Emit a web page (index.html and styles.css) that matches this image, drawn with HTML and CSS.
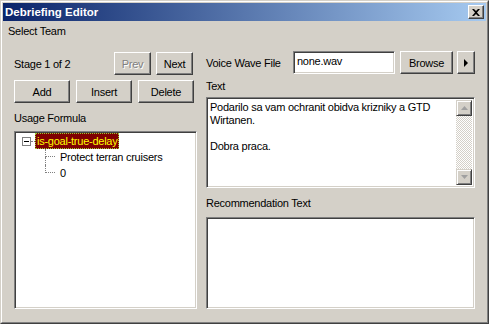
FILE: index.html
```html
<!DOCTYPE html>
<html lang="en">
<head>
    <meta charset="UTF-8">
    <title>Debriefing Editor</title>
    <link rel="stylesheet" href="styles.css">
</head>
<body>
    <div class="window">
        <div class="frame">
            <div class="titlebar">
                <span class="title">Debriefing Editor</span>
                <button class="close-btn" title="Close">
                    <svg width="8" height="7" viewBox="0 0 8 7"><path d="M0 0h2l2 2 2-2h2L5 3.5 8 7H6L4 5 2 7H0l3-3.5z" fill="#000"/></svg>
                </button>
            </div>
            <div class="menubar"><span class="menu-item">Select Team</span></div>

            <div class="content">
                <div class="left">
                    <div class="stage-row">
                        <span class="stage-label">Stage 1 of 2</span>
                        <button class="btn btn-small" disabled>Prev</button>
                        <button class="btn btn-small">Next</button>
                    </div>
                    <div class="edit-row">
                        <button class="btn btn-wide">Add</button>
                        <button class="btn btn-wide">Insert</button>
                        <button class="btn btn-wide">Delete</button>
                    </div>
                    <div class="label label-formula">Usage Formula</div>
                    <div class="sunken tree">
                        <div class="tree-row">
                            <span class="expander"><span class="minus"></span></span>
                            <span class="stub"></span>
                            <span class="node selected">is-goal-true-delay</span>
                        </div>
                        <div class="tree-row">
                            <span class="indent"></span>
                            <span class="elbow"><span class="elbow-top"></span><span class="elbow-bottom"></span></span>
                            <span class="node">Protect terran cruisers</span>
                        </div>
                        <div class="tree-row">
                            <span class="indent"></span>
                            <span class="elbow"><span class="elbow-top"></span></span>
                            <span class="node">0</span>
                        </div>
                    </div>
                </div>

                <div class="right">
                    <div class="voice-row">
                        <span class="voice-label">Voice Wave File</span>
                        <div class="sunken field">none.wav</div>
                        <button class="btn btn-browse">Browse</button>
                        <button class="btn btn-play">
                            <svg width="4" height="8" viewBox="0 0 4 8"><path d="M0 0l4 4-4 4z" fill="#000"/></svg>
                        </button>
                    </div>
                    <div class="label label-text">Text</div>
                    <div class="sunken memo">
                        <div class="memo-text">Podarilo sa vam ochranit obidva krizniky a GTD Wirtanen.<br><br>Dobra praca.</div>
                        <div class="scrollbar">
                            <div class="scroll-btn">
                                <svg width="7" height="4" viewBox="0 0 7 4"><path d="M3.5 0L7 4H0z" fill="#a0a0a0"/></svg>
                            </div>
                            <div class="scroll-track"></div>
                            <div class="scroll-btn">
                                <svg width="7" height="4" viewBox="0 0 7 4"><path d="M0 0h7L3.5 4z" fill="#a0a0a0"/></svg>
                            </div>
                        </div>
                    </div>
                    <div class="label label-rec">Recommendation Text</div>
                    <div class="sunken memo-rec"></div>
                </div>
            </div>
        </div>
    </div>
</body>
</html>
```

FILE: styles.css
```css
html, body {
    margin: 0;
    padding: 0;
}

body {
    width: 489px;
    height: 324px;
    font-family: 'Liberation Sans', Arial, sans-serif;
    font-size: 11px;
    letter-spacing: -0.25px;
    color: #000;
    background: #d4d0c8;
    overflow: hidden;
}

.window {
    box-sizing: border-box;
    width: 489px;
    height: 324px;
    border: 1px solid;
    border-color: #d4d0c8 #404040 #404040 #d4d0c8;
}

.frame {
    box-sizing: border-box;
    height: 100%;
    padding: 1px;
    border: 1px solid;
    border-color: #fff #808080 #808080 #fff;
    display: flex;
    flex-direction: column;
}

.titlebar {
    height: 18px;
    background: linear-gradient(to right, #0a246a, #a6caf0);
    display: flex;
    align-items: center;
    justify-content: space-between;
}

.title {
    color: #fff;
    font-weight: bold;
    font-size: 11.5px;
    letter-spacing: 0;
    padding-left: 2px;
}

.close-btn {
    box-sizing: border-box;
    width: 16px;
    height: 14px;
    margin-right: 2px;
    padding: 0;
    background: #d4d0c8;
    border: 1px solid;
    border-color: #fff #404040 #404040 #fff;
    box-shadow: inset -1px -1px #808080;
    display: flex;
    align-items: center;
    justify-content: center;
}

.menubar {
    height: 19px;
    display: flex;
    align-items: center;
    padding-left: 5px;
}

.content {
    flex: 1;
    display: flex;
    padding-left: 11px;
}

.left {
    width: 183px;
    display: flex;
    flex-direction: column;
    padding-top: 12px;
}

.right {
    width: 269px;
    margin-left: 9px;
    display: flex;
    flex-direction: column;
    padding-top: 11px;
}

.btn {
    box-sizing: border-box;
    height: 23px;
    padding: 0;
    font-family: inherit;
    font-size: 11px;
    letter-spacing: -0.25px;
    color: #000;
    background: #d4d0c8;
    border: 1px solid;
    border-color: #fff #404040 #404040 #fff;
    box-shadow: inset -1px -1px #808080;
}

.btn:disabled {
    color: #808080;
    text-shadow: 1px 1px #fff;
}

.stage-row {
    display: flex;
    align-items: center;
    height: 23px;
    padding-right: 4px;
}

.stage-label {
    flex: 1;
}

.btn-small {
    width: 37px;
    margin-left: 5px;
}

.edit-row {
    display: flex;
    justify-content: space-between;
    margin-top: 5px;
    padding-right: 3px;
}

.btn-wide {
    width: 56px;
}

.label {
    height: 13px;
    line-height: 13px;
}

.label-formula {
    margin-top: 9px;
}

.sunken {
    box-sizing: border-box;
    background: #fff;
    border: 1px solid;
    border-color: #808080 #fff #fff #808080;
    box-shadow: inset 1px 1px #404040, inset -1px -1px #d4d0c8;
}

.tree {
    margin-top: 6px;
    height: 178px;
    padding: 1px 2px;
}

.tree-row {
    display: flex;
    align-items: center;
    height: 16px;
}

.expander {
    box-sizing: border-box;
    width: 9px;
    height: 9px;
    margin-left: 5px;
    border: 1px solid #808080;
    display: flex;
    align-items: center;
    justify-content: center;
}

.minus {
    width: 5px;
    height: 1px;
    background: #000;
}

.stub {
    width: 4px;
    border-top: 1px dotted #808080;
}

.node {
    box-sizing: border-box;
    height: 16px;
    line-height: 14px;
    padding: 0 1px;
    border: 1px solid transparent;
    white-space: nowrap;
}

.selected {
    background: #800000;
    color: #ffff00;
    border: 1px dotted #9acd32;
}

.indent {
    width: 28px;
}

.elbow {
    width: 10px;
    height: 16px;
    margin-right: 3px;
    display: flex;
    flex-direction: column;
}

.elbow-top {
    height: 7px;
    border-left: 1px dotted #808080;
    border-bottom: 1px dotted #808080;
}

.elbow-bottom {
    height: 8px;
    border-left: 1px dotted #808080;
}

.voice-row {
    display: flex;
    align-items: center;
    height: 23px;
}

.voice-label {
    width: 87px;
}

.field {
    width: 102px;
    height: 23px;
    line-height: 19px;
    padding-left: 3px;
}

.btn-browse {
    width: 53px;
    margin-left: 5px;
}

.btn-play {
    width: 18px;
    margin-left: 4px;
    display: flex;
    align-items: center;
    justify-content: center;
}

.label-text {
    margin-top: 6px;
}

.memo {
    margin-top: 4px;
    height: 91px;
    padding: 2px;
    display: flex;
}

.memo-text {
    flex: 1;
    padding: 1px 0 0 1px;
    line-height: 13px;
}

.scrollbar {
    width: 16px;
    display: flex;
    flex-direction: column;
}

.scroll-btn {
    box-sizing: border-box;
    height: 16px;
    background: #d4d0c8;
    border: 1px solid;
    border-color: #d4d0c8 #404040 #404040 #d4d0c8;
    box-shadow: inset 1px 1px #fff, inset -1px -1px #808080;
    display: flex;
    align-items: center;
    justify-content: center;
}

.scroll-track {
    flex: 1;
    background: repeating-conic-gradient(#fff 0 25%, #d4d0c8 0 50%) 0 0 / 2px 2px;
}

.label-rec {
    margin-top: 9px;
}

.memo-rec {
    margin-top: 7px;
    height: 92px;
}
```
